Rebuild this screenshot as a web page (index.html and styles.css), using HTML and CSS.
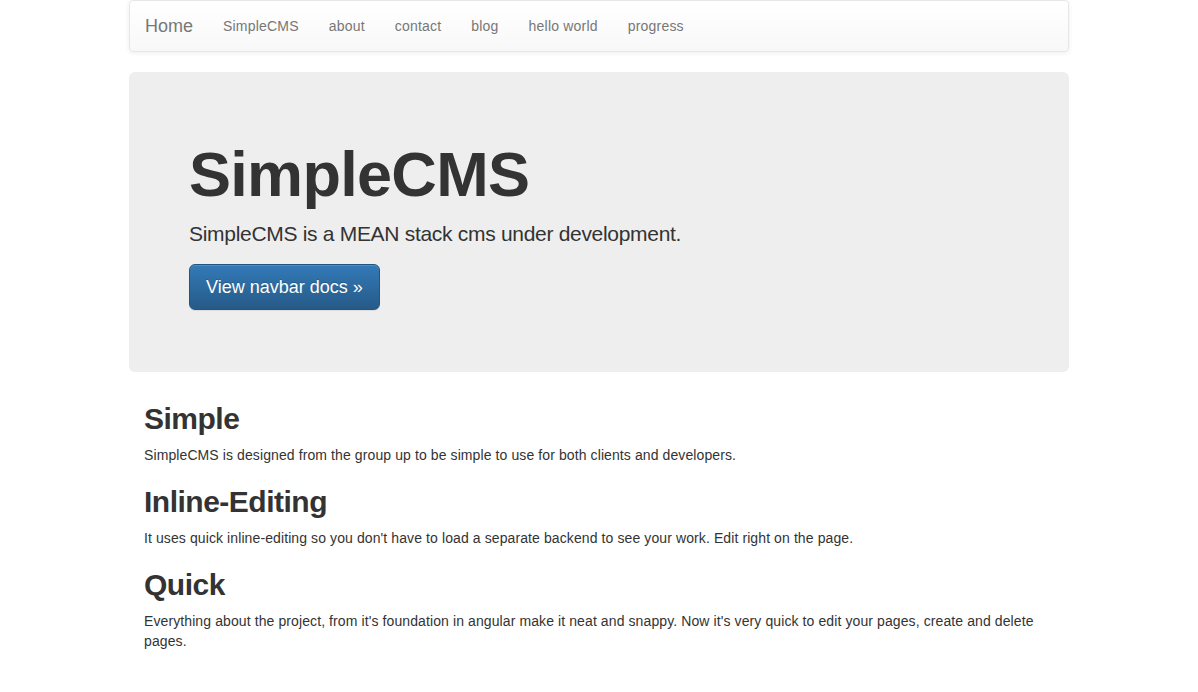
FILE: index.html
```html
<!DOCTYPE html>
<html>
<head>
<meta charset="utf-8">
<title>SimpleCMS</title>
<link rel="stylesheet" href="styles.css">
</head>
<body>
<div class="container">
  <nav class="navbar">
    <a class="brand" href="#">Home</a>
    <ul class="nav">
      <li><a href="#">SimpleCMS</a></li>
      <li><a href="#">about</a></li>
      <li><a href="#">contact</a></li>
      <li><a href="#">blog</a></li>
      <li><a href="#">hello world</a></li>
      <li><a href="#">progress</a></li>
    </ul>
  </nav>
  <div class="jumbotron">
    <h1>SimpleCMS</h1>
    <p class="lead">SimpleCMS is a MEAN stack cms under development.</p>
    <p class="lead"><a class="btn" href="#">View navbar docs &raquo;</a></p>
  </div>
  <div class="content">
    <h2>Simple</h2>
    <p>SimpleCMS is designed from the group up to be simple to use for both clients and developers.</p>
    <h2>Inline-Editing</h2>
    <p>It uses quick inline-editing so you don't have to load a separate backend to see your work. Edit right on the page.</p>
    <h2>Quick</h2>
    <p>Everything about the project, from it's foundation in angular make it neat and snappy. Now it's very quick to edit your pages, create and delete pages.</p>
  </div>
</div>
</body>
</html>
```

FILE: styles.css
```css
* { box-sizing: border-box; }
html, body { margin: 0; padding: 0; }
body {
  font-family: "Liberation Sans", Arial, sans-serif;
  font-size: 14px;
  line-height: 1.42857143;
  color: #333;
  background: #fff;
  letter-spacing: 0.1px;
}
a { text-decoration: none; }
.container {
  width: 970px;
  padding: 0 15px;
  margin: 0 auto;
}
.navbar {
  display: flex;
  align-items: stretch;
  min-height: 50px;
  margin-bottom: 20px;
  border: 1px solid #e7e7e7;
  border-radius: 4px;
  background-image: linear-gradient(to bottom, #fff 0, #f8f8f8 100%);
  box-shadow: inset 0 1px 0 rgba(255,255,255,.15), 0 1px 5px rgba(0,0,0,.075);
  padding: 0;
}
.brand {
  display: block;
  height: 50px;
  padding: 15px;
  font-size: 18px;
  line-height: 20px;
  color: #777;
  letter-spacing: 0;
  text-shadow: 0 1px 0 rgba(255,255,255,.25);
}
.nav {
  display: flex;
  list-style: none;
  margin: 0;
  padding: 0;
}
.nav a {
  display: block;
  padding: 15px;
  line-height: 20px;
  color: #777;
  letter-spacing: 0.2px;
  text-shadow: 0 1px 0 rgba(255,255,255,.25);
}
.jumbotron {
  padding: 48px 60px 47px;
  margin-bottom: 30px;
  background: #eee;
  border-radius: 6px;
}
.jumbotron h1 {
  margin: 20px 0 10px;
  font-size: 63px;
  font-weight: 700;
  letter-spacing: -0.7px;
  line-height: 1.1;
  color: inherit;
}
.jumbotron .lead {
  margin: 0 0 15px;
  font-size: 21px;
  font-weight: 200;
  letter-spacing: -0.3px;
}
.btn {
  display: inline-block;
  padding: 10px 16px;
  font-size: 18px;
  line-height: 1.3333333;
  letter-spacing: 0;
  border-radius: 6px;
  color: #fff;
  border: 1px solid #245580;
  background-image: linear-gradient(to bottom, #337ab7 0, #265a88 100%);
  text-shadow: 0 -1px 0 rgba(0,0,0,.2);
  box-shadow: inset 0 1px 0 rgba(255,255,255,.15), 0 1px 1px rgba(0,0,0,.075);
  vertical-align: middle;
}
.content {
  padding: 0 15px;
}
.content h2 {
  margin: 20px 0 10px;
  font-size: 30px;
  font-weight: 700;
  letter-spacing: -0.5px;
  line-height: 1.1;
}
.content p {
  margin: 0 0 10px;
}
```
